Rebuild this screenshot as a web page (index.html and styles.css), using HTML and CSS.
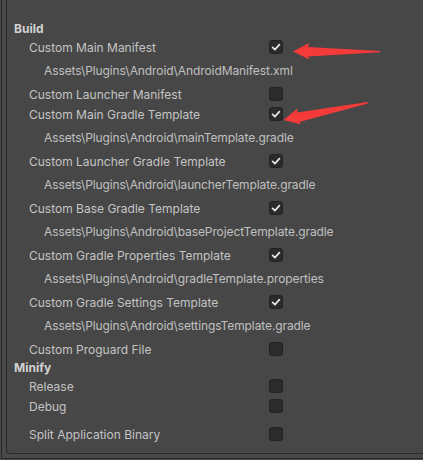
FILE: index.html
```html
<!DOCTYPE html>
<html>
<head>
<meta charset="utf-8">
<link rel="stylesheet" href="styles.css">
</head>
<body>
<div class="window">
  <div class="outer">
    <div class="panel">
      <div class="header first">Build</div>
      <div class="row"><span class="label">Custom Main Manifest</span><span class="cb on"><svg viewBox="0 0 14 14"><polyline points="3.6,7.4 5.9,9.6 10.4,4.6"/></svg></span></div>
      <div class="path">Assets\Plugins\Android\AndroidManifest.xml</div>
      <div class="row"><span class="label">Custom Launcher Manifest</span><span class="cb"></span></div>
      <div class="row"><span class="label">Custom Main Gradle Template</span><span class="cb on"><svg viewBox="0 0 14 14"><polyline points="3.6,7.4 5.9,9.6 10.4,4.6"/></svg></span></div>
      <div class="path">Assets\Plugins\Android\mainTemplate.gradle</div>
      <div class="row"><span class="label">Custom Launcher Gradle Template</span><span class="cb on"><svg viewBox="0 0 14 14"><polyline points="3.6,7.4 5.9,9.6 10.4,4.6"/></svg></span></div>
      <div class="path">Assets\Plugins\Android\launcherTemplate.gradle</div>
      <div class="row"><span class="label">Custom Base Gradle Template</span><span class="cb on"><svg viewBox="0 0 14 14"><polyline points="3.6,7.4 5.9,9.6 10.4,4.6"/></svg></span></div>
      <div class="path">Assets\Plugins\Android\baseProjectTemplate.gradle</div>
      <div class="row"><span class="label">Custom Gradle Properties Template</span><span class="cb on"><svg viewBox="0 0 14 14"><polyline points="3.6,7.4 5.9,9.6 10.4,4.6"/></svg></span></div>
      <div class="path">Assets\Plugins\Android\gradleTemplate.properties</div>
      <div class="row"><span class="label">Custom Gradle Settings Template</span><span class="cb on"><svg viewBox="0 0 14 14"><polyline points="3.6,7.4 5.9,9.6 10.4,4.6"/></svg></span></div>
      <div class="path">Assets\Plugins\Android\settingsTemplate.gradle</div>
      <div class="row"><span class="label">Custom Proguard File</span><span class="cb"></span></div>
      <div class="header">Minify</div>
      <div class="row"><span class="label">Release</span><span class="cb"></span></div>
      <div class="row"><span class="label">Debug</span><span class="cb"></span></div>
      <div class="row spaced"><span class="label">Split Application Binary</span><span class="cb"></span></div>
    </div>
  </div>
  <svg class="arrows" viewBox="0 0 423 460" width="423" height="460">
    <g transform="translate(293,51.5)">
      <polygon class="arrow" points="0,0 16,-8.5 15,-4.5 87,-0.6 87,0.8 15,5 16.5,8"/>
    </g>
    <g transform="translate(283.5,120) rotate(-11.6)">
      <polygon class="arrow" points="0,0 16,-8.5 15,-4.5 86,-0.6 86,0.8 15,5 16.5,8"/>
    </g>
  </svg>
</div>
</body>
</html>
```

FILE: styles.css
```css
* { box-sizing: border-box; }
html, body { margin: 0; padding: 0; }
body {
  width: 423px;
  height: 460px;
  overflow: hidden;
  background: #494949;
  font-family: Inter, "Noto Sans", "Liberation Sans", sans-serif;
  font-size: 12px;
  color: #c4c4c4;
}
.window {
  position: relative;
  width: 423px;
  height: 460px;
  background: #494949;
}
.outer {
  margin-left: 1px;
  height: 459px;
  border-left: 1px solid #2a2a2a;
  border-bottom: 1px solid #2a2a2a;
}
.panel {
  margin-left: 4px;
  height: 454px;
  border-left: 1px solid #2a2a2a;
  border-bottom: 1px solid #2a2a2a;
  border-bottom-left-radius: 4px;
  background: #474747;
  padding: 20px 0 0 7px;
}
.header {
  height: 17px;
  line-height: 16px;
  padding-top: 1px;
  font-weight: 700;
  color: #d2d2d2;
}
.row {
  height: 20px;
  display: flex;
  align-items: flex-start;
}
.row.spaced { margin-top: 8px; }
.label {
  width: 255px;
  height: 20px;
  padding-left: 15px;
  padding-top: 2px;
  line-height: 18px;
  white-space: nowrap;
}
.cb {
  width: 14px;
  height: 14px;
  border-radius: 3px;
  background: #2b2b2b;
  border: 1px solid #222222;
  display: flex;
  align-items: center;
  justify-content: center;
  margin-top: 3px;
}
.cb svg {
  width: 14px;
  height: 14px;
  margin: -1px;
}
.cb svg polyline {
  fill: none;
  stroke: #e6e6e6;
  stroke-width: 1.7;
  stroke-linecap: round;
  stroke-linejoin: round;
}
.path {
  height: 27px;
  line-height: 26px;
  padding-top: 1px;
  padding-left: 30px;
  white-space: nowrap;
  letter-spacing: -0.1px;
  color: #c0c0c0;
}
.arrows {
  position: absolute;
  left: 0;
  top: 0;
  pointer-events: none;
}
.arrow {
  fill: #f53a3a;
}
```
